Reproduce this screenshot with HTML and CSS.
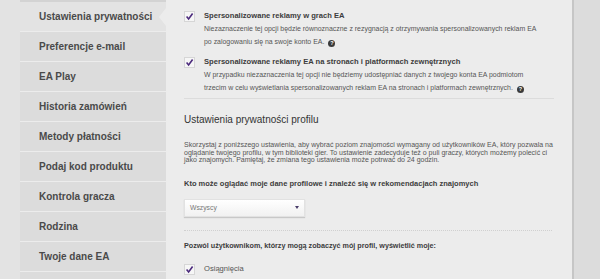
FILE: index.html
```html
<!DOCTYPE html>
<html lang="pl">
<head>
    <meta charset="UTF-8">
    <title>Ustawienia prywatności</title>
    <link rel="stylesheet" href="styles.css">
</head>
<body>
    <div class="page">
        <ul class="sidebar">
            <li class="active"><a href="#">Ustawienia prywatności</a></li>
            <li><a href="#">Preferencje e-mail</a></li>
            <li><a href="#">EA Play</a></li>
            <li><a href="#">Historia zamówień</a></li>
            <li><a href="#">Metody płatności</a></li>
            <li><a href="#">Podaj kod produktu</a></li>
            <li><a href="#">Kontrola gracza</a></li>
            <li><a href="#">Rodzina</a></li>
            <li><a href="#">Twoje dane EA</a></li>
        </ul>

        <main class="content">
            <div class="ads">
                <div class="option">
                    <span class="check">
                        <svg viewBox="0 0 11 11" width="11" height="11"><path d="M2.6 5.6 L4.6 7.9 L8.6 2.6" fill="none" stroke="#4b2a7c" stroke-width="1.6"/></svg>
                    </span>
                    <div class="option-text">
                        <div class="option-title">Spersonalizowane reklamy w grach EA</div>
                        <div class="option-desc">Niezaznaczenie tej opcji będzie równoznaczne z rezygnacją z otrzymywania spersonalizowanych reklam EA po zalogowaniu się na swoje konto EA.<span class="help">?</span></div>
                    </div>
                </div>
                <div class="option">
                    <span class="check">
                        <svg viewBox="0 0 11 11" width="11" height="11"><path d="M2.6 5.6 L4.6 7.9 L8.6 2.6" fill="none" stroke="#4b2a7c" stroke-width="1.6"/></svg>
                    </span>
                    <div class="option-text">
                        <div class="option-title">Spersonalizowane reklamy EA na stronach i platformach zewnętrznych</div>
                        <div class="option-desc">W przypadku niezaznaczenia tej opcji nie będziemy udostępniać danych z twojego konta EA podmiotom trzecim w celu wyświetlania spersonalizowanych reklam EA na stronach i platformach zewnętrznych.<span class="help">?</span></div>
                    </div>
                </div>
            </div>

            <h2>Ustawienia prywatności profilu</h2>
            <p class="intro">Skorzystaj z poniższego ustawienia, aby wybrać poziom znajomości wymagany od użytkowników EA, który pozwala na oglądanie twojego profilu, w tym biblioteki gier. To ustawienie zadecyduje też o puli graczy, których możemy polecić ci jako znajomych. Pamiętaj, że zmiana tego ustawienia może potrwać do 24 godzin.</p>

            <div class="label label-wide">Kto może oglądać moje dane profilowe i znaleźć się w rekomendacjach znajomych</div>
            <div class="select">
                <span>Wszyscy</span>
                <span class="arrow"></span>
            </div>

            <div class="dotted"></div>

            <div class="label">Pozwól użytkownikom, którzy mogą zobaczyć mój profil, wyświetlić moje:</div>
            <div class="option option-plain">
                <span class="check">
                    <svg viewBox="0 0 11 11" width="11" height="11"><path d="M2.6 5.6 L4.6 7.9 L8.6 2.6" fill="none" stroke="#4b2a7c" stroke-width="1.6"/></svg>
                </span>
                <div class="plain-text">Osiągnięcia</div>
            </div>
        </main>

        <div class="gutter"></div>
    </div>
</body>
</html>
```

FILE: styles.css
```css
body {
    margin: 0;
    background-color: #e3e3e3;
    font-family: "Liberation Sans", Arial, sans-serif;
    color: #444;
    overflow: hidden;
}

.page {
    display: flex;
    padding-left: 20px;
    height: 279px;
}

/* left menu */
.sidebar {
    list-style: none;
    margin: 0;
    padding: 0;
    width: 146px;
    flex: none;
    background-color: #dcdcdc;
    border-top: 2px solid #d3d3d3;
}

.sidebar li {
    position: relative;
    height: 29px;
    border-bottom: 1px solid #ececec;
    display: flex;
    align-items: center;
}

.sidebar a {
    padding-left: 19px;
    font-size: 10px;
    font-weight: bold;
    color: #4a4a4a;
    text-decoration: none;
}

.sidebar li.active {
    background-color: #e3e3e3;
}

.sidebar li.active::after {
    content: "";
    position: absolute;
    right: 0;
    top: 6px;
    border-top: 9px solid transparent;
    border-bottom: 9px solid transparent;
    border-right: 7px solid #ececec;
}

/* main panel */
.content {
    width: 370px;
    flex: none;
    background-color: #ececec;
    padding: 0 18px;
    border-right: 2px solid #c6c6c6;
}

.gutter {
    flex: 1;
    background-color: #dcdcdc;
}

.ads {
    padding-top: 10px;
    padding-bottom: 4px;
    border-bottom: 1px solid #dcdcdc;
}

.option {
    display: flex;
    gap: 9px;
    margin-bottom: 8px;
}

.option:last-child {
    margin-bottom: 0;
}

.option-text {
    width: 338px;
}

.check {
    flex: none;
    width: 11px;
    height: 11px;
    margin-top: 1px;
    background-color: #f6f6f6;
    box-shadow: inset 0 0 0 1px #d6d6d6;
    display: flex;
}

.option-title {
    font-size: 7.6px;
    line-height: 12px;
    font-weight: bold;
    color: #3c3c3c;
    white-space: nowrap;
}

.option-desc {
    font-size: 6.95px;
    line-height: 13px;
    color: #555;
}

.help {
    display: inline-block;
    width: 7px;
    height: 7px;
    border-radius: 50%;
    background-color: #3a3a3a;
    color: #fff;
    font-size: 5.5px;
    font-weight: bold;
    line-height: 7px;
    text-align: center;
    vertical-align: -1px;
    margin-left: 4px;
}

h2 {
    margin: 14px 0 0;
    font-size: 10px;
    line-height: 14px;
    font-weight: normal;
    color: #333;
}

.intro {
    margin: 14px 0 0;
    font-size: 7px;
    line-height: 7.5px;
    color: #555;
}

.label {
    margin-top: 14px;
    font-size: 7.2px;
    line-height: 12px;
    font-weight: bold;
    color: #3c3c3c;
}

.label-wide {
    font-size: 7.5px;
}

.select {
    margin-top: 9px;
    width: 109px;
    height: 16px;
    padding: 0 5px;
    display: flex;
    align-items: center;
    justify-content: space-between;
    background: linear-gradient(#ffffff, #f1f1f1);
    border: 1px solid #e2e2e2;
    box-shadow: 0 1px 1px rgba(0, 0, 0, 0.15);
    font-size: 6.8px;
    color: #777;
}

.arrow {
    border-left: 2.5px solid transparent;
    border-right: 2.5px solid transparent;
    border-top: 3px solid #4a3d6a;
}

.dotted {
    margin-top: 13px;
    border-top: 1px dotted #d0d0d0;
    margin-right: 2px;
}

.dotted + .label {
    margin-top: 9px;
}

.option-plain {
    margin-top: 11px;
}

.plain-text {
    font-size: 7.6px;
    line-height: 12px;
    color: #555;
}
```
